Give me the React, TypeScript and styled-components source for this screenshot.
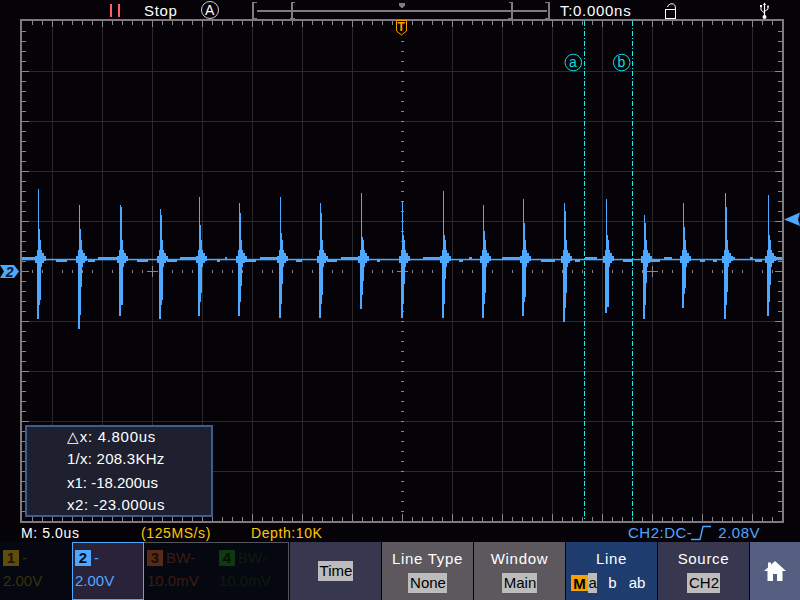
import React from "react";
import styled, { createGlobalStyle } from "styled-components";

const Global = createGlobalStyle`
  html, body { margin: 0; padding: 0; background: #050308; }
  #root { width: 800px; height: 600px; overflow: hidden; }
`;

const FONT = `"Liberation Sans", Arial, sans-serif`;
const BLUE = "#4fa8ff";
const GRID = "#2b292c";
const FRAME = "#7f7a80";
const TICK = "#8a8589";
const CYAN = "#12dede";
const ORANGE = "#f5a100";

const Page = styled.div`
  width: 800px;
  height: 600px;
  background: #050308;
  font-family: ${FONT};
  font-size: 15px;
  letter-spacing: 0.7px;
  display: flex;
  flex-direction: column;
  overflow: hidden;
`;

const TopBar = styled.header`
  height: 19px;
  flex: none;
  display: grid;
  grid-template-columns: 144px 56px 52px 308px 105px 95px auto;
  align-items: center;
  color: #fff;
`;

const PauseCell = styled.div`
  display: flex;
  justify-content: flex-end;
  gap: 6px;
  padding-right: 24px;
`;

const PauseBar = styled.i`
  width: 2px;
  height: 13px;
  background: #ff5f5f;
`;

const TopText = styled.span`
  line-height: 19px;
  white-space: nowrap;
`;

const IconCell = styled.svg`
  display: block;
  overflow: visible;
`;

const Screen = styled.main`
  position: relative;
  height: 504px;
  flex: none;
`;

const Chart = styled.svg`
  display: block;
  width: 800px;
  height: 504px;
`;

const InfoBox = styled.section`
  position: absolute;
  left: 25px;
  top: 406px;
  width: 188px;
  height: 92px;
  box-sizing: border-box;
  border: 2px solid #3d5c90;
  background: #1e2030;
  color: #fff;
  padding-left: 40px;
  display: grid;
  grid-template-rows: 20px 24px 24px 20px;
  align-items: center;
`;

const InfoLine = styled.div<{ $spacing: number }>`
  white-space: nowrap;
  line-height: 20px;
  letter-spacing: ${(p) => p.$spacing}px;
`;

const Status = styled.div`
  height: 19px;
  flex: none;
  padding-left: 21px;
  display: grid;
  grid-template-columns: 120px 110px 377px auto;
  align-items: center;
  font-size: 14px;
  letter-spacing: 0.6px;
  white-space: nowrap;
`;

const StatusText = styled.span<{ $color: string }>`
  color: ${(p) => p.$color};
`;

const TriggerInfo = styled.div`
  display: flex;
  align-items: center;
  color: ${BLUE};
  font-size: 15px;
  letter-spacing: 0.5px;
`;

const EdgeIcon = styled.svg`
  display: block;
  margin: 0 6px 0 -1px;
`;

const Bottom = styled.footer`
  height: 58px;
  flex: none;
  display: flex;
  gap: 1px;
`;

const Channels = styled.div`
  width: 289px;
  box-sizing: border-box;
  display: grid;
  grid-template-columns: repeat(4, 72px);
  background: #050810;
  border-right: 1px solid #56555a;
`;

const Channel = styled.div<{ $active?: boolean; $dim?: boolean }>`
  box-sizing: border-box;
  padding: ${(p) => (p.$active || p.$dim ? 6 : 7)}px 0 0 ${(p) => (p.$active ? 2 : 3)}px;
  background: ${(p) => (p.$active ? "#2a2238" : "#050810")};
  border: ${(p) => (p.$active ? `1px solid ${BLUE}` : "none")};
  border-top: ${(p) => (p.$dim ? "1px solid #56555a" : undefined)};
  letter-spacing: 0;
`;

const ChannelTop = styled.div<{ $color: string }>`
  height: 17px;
  display: flex;
  align-items: center;
  gap: 3px;
  color: ${(p) => p.$color};
`;

const Badge = styled.b<{ $bg: string; $fg: string }>`
  width: 16px;
  height: 16px;
  display: flex;
  align-items: center;
  justify-content: center;
  background: ${(p) => p.$bg};
  color: ${(p) => p.$fg};
  font-size: 15px;
`;

const ChannelValue = styled.div<{ $color: string }>`
  margin-top: 6px;
  line-height: 18px;
  color: ${(p) => p.$color};
  white-space: nowrap;
`;

const MenuButton = styled.div<{ $bg: string; $single?: boolean }>`
  width: 91px;
  flex: none;
  box-sizing: border-box;
  padding-top: ${(p) => (p.$single ? 0 : 8)}px;
  background: ${(p) => p.$bg};
  color: #fff;
  display: flex;
  flex-direction: column;
  align-items: center;
  justify-content: ${(p) => (p.$single ? "center" : "flex-start")};
  gap: 5px;
  text-align: center;
`;

const MenuLabel = styled.div`
  line-height: 18px;
  white-space: nowrap;
`;

const Chip = styled.span`
  display: inline-block;
  background: #bcbcbc;
  color: #000;
  line-height: 20px;
  letter-spacing: 0;
  padding: 0 1px 0 2px;
`;

const LineOptions = styled.div`
  height: 20px;
  width: 91px;
  box-sizing: border-box;
  padding-left: 5px;
  display: flex;
  align-items: center;
  white-space: nowrap;
  letter-spacing: 0;
`;

const MarkChip = styled.b`
  width: 17px;
  height: 16px;
  background: ${ORANGE};
  color: #000;
  display: flex;
  align-items: center;
  justify-content: center;
`;

const LineOption = styled.span<{ $active?: boolean; $gap: number }>`
  margin-right: ${(p) => p.$gap}px;
  padding: 0 ${(p) => (p.$active ? 0.5 : 0)}px;
  height: 20px;
  line-height: 20px;
  background: ${(p) => (p.$active ? "#bcbcbc" : "transparent")};
  color: ${(p) => (p.$active ? "#000" : "#fff")};
`;

const HomeButton = styled.div`
  flex: 1;
  background: #545f82;
  display: flex;
  align-items: center;
  justify-content: center;
`;

const range = (a: number, b: number, s: number) => {
  const r: number[] = [];
  for (let v = a; v <= b; v += s) r.push(v);
  return r;
};

// x, top, wide-from-top, bottom, wide-to-bottom
const SPIKES: number[][] = [
  [38, 189, 229, 319, 300], [79, 205, 229, 329, 287], [120, 205, 207, 316, 305],
  [160, 209, 215, 319, 300], [199, 197, 225, 316, 293], [239, 203, 213, 316, 286],
  [280, 197, 233, 318, 284], [320, 203, 213, 318, 295], [361, 193, 237, 309, 281],
  [402, 201, 235, 318, 284], [443, 191, 235, 318, 279], [483, 205, 231, 318, 293],
  [523, 199, 223, 316, 297], [564, 203, 211, 322, 293], [606, 199, 235, 313, 307],
  [644, 215, 223, 319, 283], [683, 203, 227, 308, 288], [725, 193, 207, 319, 292],
  [768, 195, 235, 316, 285],
];

const HIGH: number[][] = [
  [22, 37], [98, 117], [180, 197], [225, 227], [260, 277], [341, 358], [423, 440],
  [469, 472], [502, 522], [585, 597], [664, 672], [731, 735], [750, 753], [775, 782],
];
const LOW: number[][] = [
  [56, 67], [88, 95], [137, 148], [167, 177], [217, 220], [245, 256], [296, 302],
  [327, 337], [377, 380], [459, 463], [541, 555], [575, 580], [623, 633], [648, 660],
  [700, 705], [713, 717], [755, 762],
];

const Wave = () => (
  <g fill={BLUE}>
    <rect x={22} y={258.8} width={760} height={1.5} />
    <g shapeRendering="crispEdges">
      {HIGH.map(([a, b]) => (
        <rect key={a} x={a} y={257} width={b - a} height={3} />
      ))}
      {LOW.map(([a, b]) => (
        <rect key={a} x={a} y={259} width={b - a} height={3} />
      ))}
      {SPIKES.map(([x, top, wide, bot, wideBot]) => (
        <g key={x}>
          <rect x={x} y={top} width={1} height={259 - top} />
          <rect x={x} y={wide} width={2} height={259 - wide} />
          <rect x={x - 1} y={259} width={2} height={bot - 259} />
          <rect x={x - 1} y={259} width={3} height={bot - 259 - 14} />
          <rect x={x - 1} y={259} width={4} height={wideBot - 259} />
          <rect x={x} y={240} width={3} height={20} />
          <rect x={x - 1} y={250} width={5} height={17} />
          <rect x={x + 4} y={253} width={2} height={10} />
          <rect x={x + 6} y={256} width={2} height={5} />
          <rect x={x - 3} y={256} width={2} height={7} />
        </g>
      ))}
    </g>
  </g>
);

const GridLayer = () => (
  <g shapeRendering="crispEdges">
    {range(52, 752, 50).filter((x) => x !== 402).map((x) => (
      <rect key={x} x={x} y={21} width={1} height={500} fill={GRID} />
    ))}
    {range(71, 471, 50).filter((y) => y !== 271).map((y) => (
      <rect key={y} x={22} y={y} width={760} height={1} fill={GRID} />
    ))}
    {range(32, 772, 10).map((x) => {
      const major = (x - 2) % 50 === 0;
      return (
        <g key={x} fill={TICK}>
          <rect x={x} y={21} width={1} height={major ? 6 : 4} />
          <rect x={x} y={major ? 514 : 517} width={1} height={major ? 7 : 4} />
          {x % 50 !== 2 && <rect x={x} y={270} width={1} height={3} />}
        </g>
      );
    })}
    {range(31, 511, 10).map((y) => {
      const major = (y - 21) % 50 === 0;
      return (
        <g key={y} fill={TICK}>
          <rect x={22} y={y} width={major ? 7 : 4} height={1} />
          <rect x={major ? 775 : 778} y={y} width={major ? 7 : 4} height={1} />
          <rect x={401} y={y} width={3} height={1} />
        </g>
      );
    })}
    {[152, 402, 652].map((x) => (
      <g key={x} fill={TICK}>
        <rect x={x - 5} y={271} width={11} height={1} />
        <rect x={x} y={266} width={1} height={11} />
      </g>
    ))}
    <rect x={20} y={19} width={764} height={2} fill={FRAME} />
    <rect x={20} y={521} width={764} height={2} fill={FRAME} />
    <rect x={20} y={19} width={2} height={504} fill={FRAME} />
    <rect x={782} y={19} width={2} height={504} fill={FRAME} />
  </g>
);

const Cursor = ({ x, cx, letter }: { x: number; cx: number; letter: string }) => (
  <g>
    <line
      x1={x + 0.5}
      y1={21}
      x2={x + 0.5}
      y2={521}
      stroke="#14f2f2"
      strokeWidth={1}
      strokeDasharray="5 2 1 2"
      shapeRendering="crispEdges"
    />
    <circle cx={cx} cy={62.5} r={8.3} fill="none" stroke={CYAN} strokeWidth={1} />
    <text x={cx} y={67} textAnchor="middle" fill={CYAN} fontFamily={FONT} fontSize={14}>
      {letter}
    </text>
  </g>
);

const Markers = () => (
  <g>
    <path d="M396.5 20.5V31L401.5 35L406.5 31V20.5Z" fill="#050308" stroke={ORANGE} strokeWidth={1} />
    <text x={401.5} y={31} textAnchor="middle" fill={ORANGE} fontFamily={FONT} fontWeight={700} fontSize={12}>
      T
    </text>
    <path d="M0 265H14L19 271.5L14 278H0L4 271.5Z" fill={BLUE} />
    <text x={10} y={276.5} textAnchor="middle" fill="#0a1a30" fontFamily={FONT} fontWeight={700} fontStyle="italic" fontSize={14}>
      2
    </text>
    <path d="M784 219.5L800 212.5L798 219.5L800 226Z" fill={BLUE} />
  </g>
);

const Gauge = () => (
  <IconCell width={308} height={19} viewBox="252 0 308 19" shapeRendering="crispEdges">
    <g fill={FRAME}>
      <rect x={257} y={9} width={290} height={2} />
      <path d="M252 1H257V2H254V17H257V19H252Z" />
      <path d="M291 1H295V2H293V17H295V18H290V17H291Z" />
      <path d="M511 1H513V18H508V17H511V2H509V1Z" />
      <path d="M545 1H550V19H545V17H548V2H545Z" />
      <path d="M399 2H405V5L402 7L399 5Z" />
    </g>
  </IconCell>
);

const Lock = () => (
  <IconCell width={12} height={17} viewBox="0 0 12 17">
    <rect x={0.5} y={7.5} width={10} height={9} fill="none" stroke="#fff" />
    <path d="M2.5 5C3 2.8 5 1.8 7 1.8C9.5 1.8 10.5 3.5 10.5 7" fill="none" stroke="#fff" />
  </IconCell>
);

const Usb = () => (
  <IconCell width={9} height={17} viewBox="0 0 9 17">
    <path d="M4.5 1V14" stroke="#fff" strokeWidth={1.2} fill="none" />
    <path d="M3 3L4.5 0.5L6 3Z" fill="#fff" />
    <path d="M1 4V8L4.5 11M8 5V7L4.5 9.5" stroke="#fff" fill="none" />
    <rect x={0} y={3} width={2} height={2} fill="#fff" />
    <circle cx={8} cy={4.5} r={1} fill="#fff" />
    <circle cx={4.5} cy={15} r={2} fill="#fff" />
  </IconCell>
);

const channels = [
  { n: "1", bg: "#5f4c0e", fg: "#1c1703", top: "-", val: "2.00V", tc: "#3f330c", vc: "#3a300d" },
  { n: "2", bg: BLUE, fg: "#04101e", top: "-", val: "2.00V", tc: BLUE, vc: BLUE, active: true },
  { n: "3", bg: "#5a2a18", fg: "#1c0a05", top: "BW-", val: "10.0mV", tc: "#3e1b12", vc: "#3e1b12", dim: true },
  { n: "4", bg: "#0f3a10", fg: "#041004", top: "BW-", val: "10.0mV", tc: "#0c1c0c", vc: "#0c1c0c", dim: true },
];

export default function App() {
  return (
    <Page>
      <Global />
      <TopBar>
        <PauseCell>
          <PauseBar />
          <PauseBar />
        </PauseCell>
        <TopText>Stop</TopText>
        <IconCell width={20} height={20} viewBox="0 0 20 20">
          <circle cx={10} cy={10} r={8.5} fill="none" stroke="#cfcfcf" strokeWidth={1} />
          <text x={10} y={15} textAnchor="middle" fill="#fff" fontFamily={FONT} fontSize={14}>
            A
          </text>
        </IconCell>
        <Gauge />
        <TopText>T:0.000ns</TopText>
        <Lock />
        <Usb />
      </TopBar>
      <Screen>
        <Chart viewBox="0 19 800 504">
          <GridLayer />
          <Cursor x={584} cx={573.3} letter="a" />
          <Cursor x={632} cx={621.7} letter="b" />
          <Wave />
          <Markers />
        </Chart>
        <InfoBox>
          <InfoLine $spacing={0.7}>△x: 4.800us</InfoLine>
          <InfoLine $spacing={0.25}>1/x: 208.3KHz</InfoLine>
          <InfoLine $spacing={0}>x1: -18.200us</InfoLine>
          <InfoLine $spacing={0.55}>x2: -23.000us</InfoLine>
        </InfoBox>
      </Screen>
      <Status>
        <StatusText $color="#ffffff">M: 5.0us</StatusText>
        <StatusText $color="#ffc800">(125MS/s)</StatusText>
        <StatusText $color="#ffc800">Depth:10K</StatusText>
        <TriggerInfo>
          CH2:DC-
          <EdgeIcon width={21} height={16} viewBox="0 0 21 16">
            <path d="M0 14.5H9L12 1.5H20" fill="none" stroke={BLUE} strokeWidth={1.4} />
          </EdgeIcon>
          2.08V
        </TriggerInfo>
      </Status>
      <Bottom>
        <Channels>
          {channels.map((c) => (
            <Channel key={c.n} $active={c.active} $dim={c.dim}>
              <ChannelTop $color={c.tc}>
                <Badge $bg={c.bg} $fg={c.fg}>{c.n}</Badge>
                {c.top}
              </ChannelTop>
              <ChannelValue $color={c.vc}>{c.val}</ChannelValue>
            </Channel>
          ))}
        </Channels>
        <MenuButton $bg="#37384f" $single>
          <Chip>Time</Chip>
        </MenuButton>
        <MenuButton $bg="#5c585e">
          <MenuLabel>Line Type</MenuLabel>
          <Chip>None</Chip>
        </MenuButton>
        <MenuButton $bg="#5c585e">
          <MenuLabel>Window</MenuLabel>
          <Chip>Main</Chip>
        </MenuButton>
        <MenuButton $bg="#1e3d6e">
          <MenuLabel>Line</MenuLabel>
          <LineOptions>
            <MarkChip>M</MarkChip>
            <LineOption $active $gap={11}>a</LineOption>
            <LineOption $gap={12}>b</LineOption>
            <LineOption $gap={0}>ab</LineOption>
          </LineOptions>
        </MenuButton>
        <MenuButton $bg="#37384f">
          <MenuLabel>Source</MenuLabel>
          <Chip>CH2</Chip>
        </MenuButton>
        <HomeButton>
          <svg width={22} height={20} viewBox="0 0 22 20">
            <path d="M11 0L22 10H18.5V20H13V13H9V20H3.5V10H0L4 6.4V1.5H7V3.7Z" fill="#fff" />
          </svg>
        </HomeButton>
      </Bottom>
    </Page>
  );
}
